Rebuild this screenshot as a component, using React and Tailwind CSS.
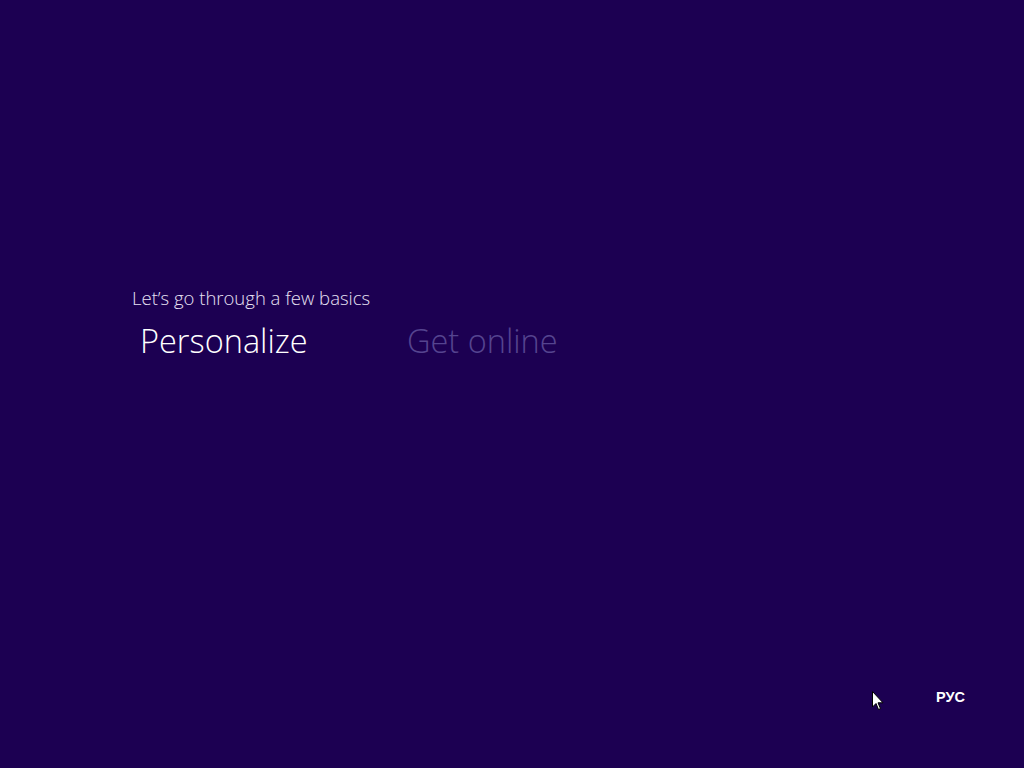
export default function App() {
  return (
    <div className="w-[1024px] h-[768px] bg-[#1c0052] relative overflow-hidden" style={{ fontFamily: '"Open Sans", "Noto Sans", sans-serif' }}>
      <div className="pt-[286px] pl-[132px]">
        <div className="text-[18.5px] leading-[24px] font-light text-[#e8e2f4]">Let’s go through a few basics</div>
        <div className="flex items-baseline mt-[9px] ml-[8px]">
          <div className="text-[32.5px] leading-[44px] font-light text-white w-[267px]">Personalize</div>
          <div className="text-[32.5px] leading-[44px] font-light text-[#55448f]">Get online</div>
        </div>
      </div>
      <svg className="absolute left-[872px] top-[691px]" width="12" height="20" viewBox="0 0 12 20">
        <path d="M0.5 0.5 L0.5 16 L4 12.5 L6.5 18.5 L8.5 17.6 L6 11.8 L11 11.8 Z" fill="white" stroke="black" strokeWidth="1" />
      </svg>
      <div className="absolute left-[936px] top-[687px] text-[14.5px] font-bold text-white" style={{ fontFamily: '"Liberation Sans", sans-serif' }}>РУС</div>
    </div>
  );
}
